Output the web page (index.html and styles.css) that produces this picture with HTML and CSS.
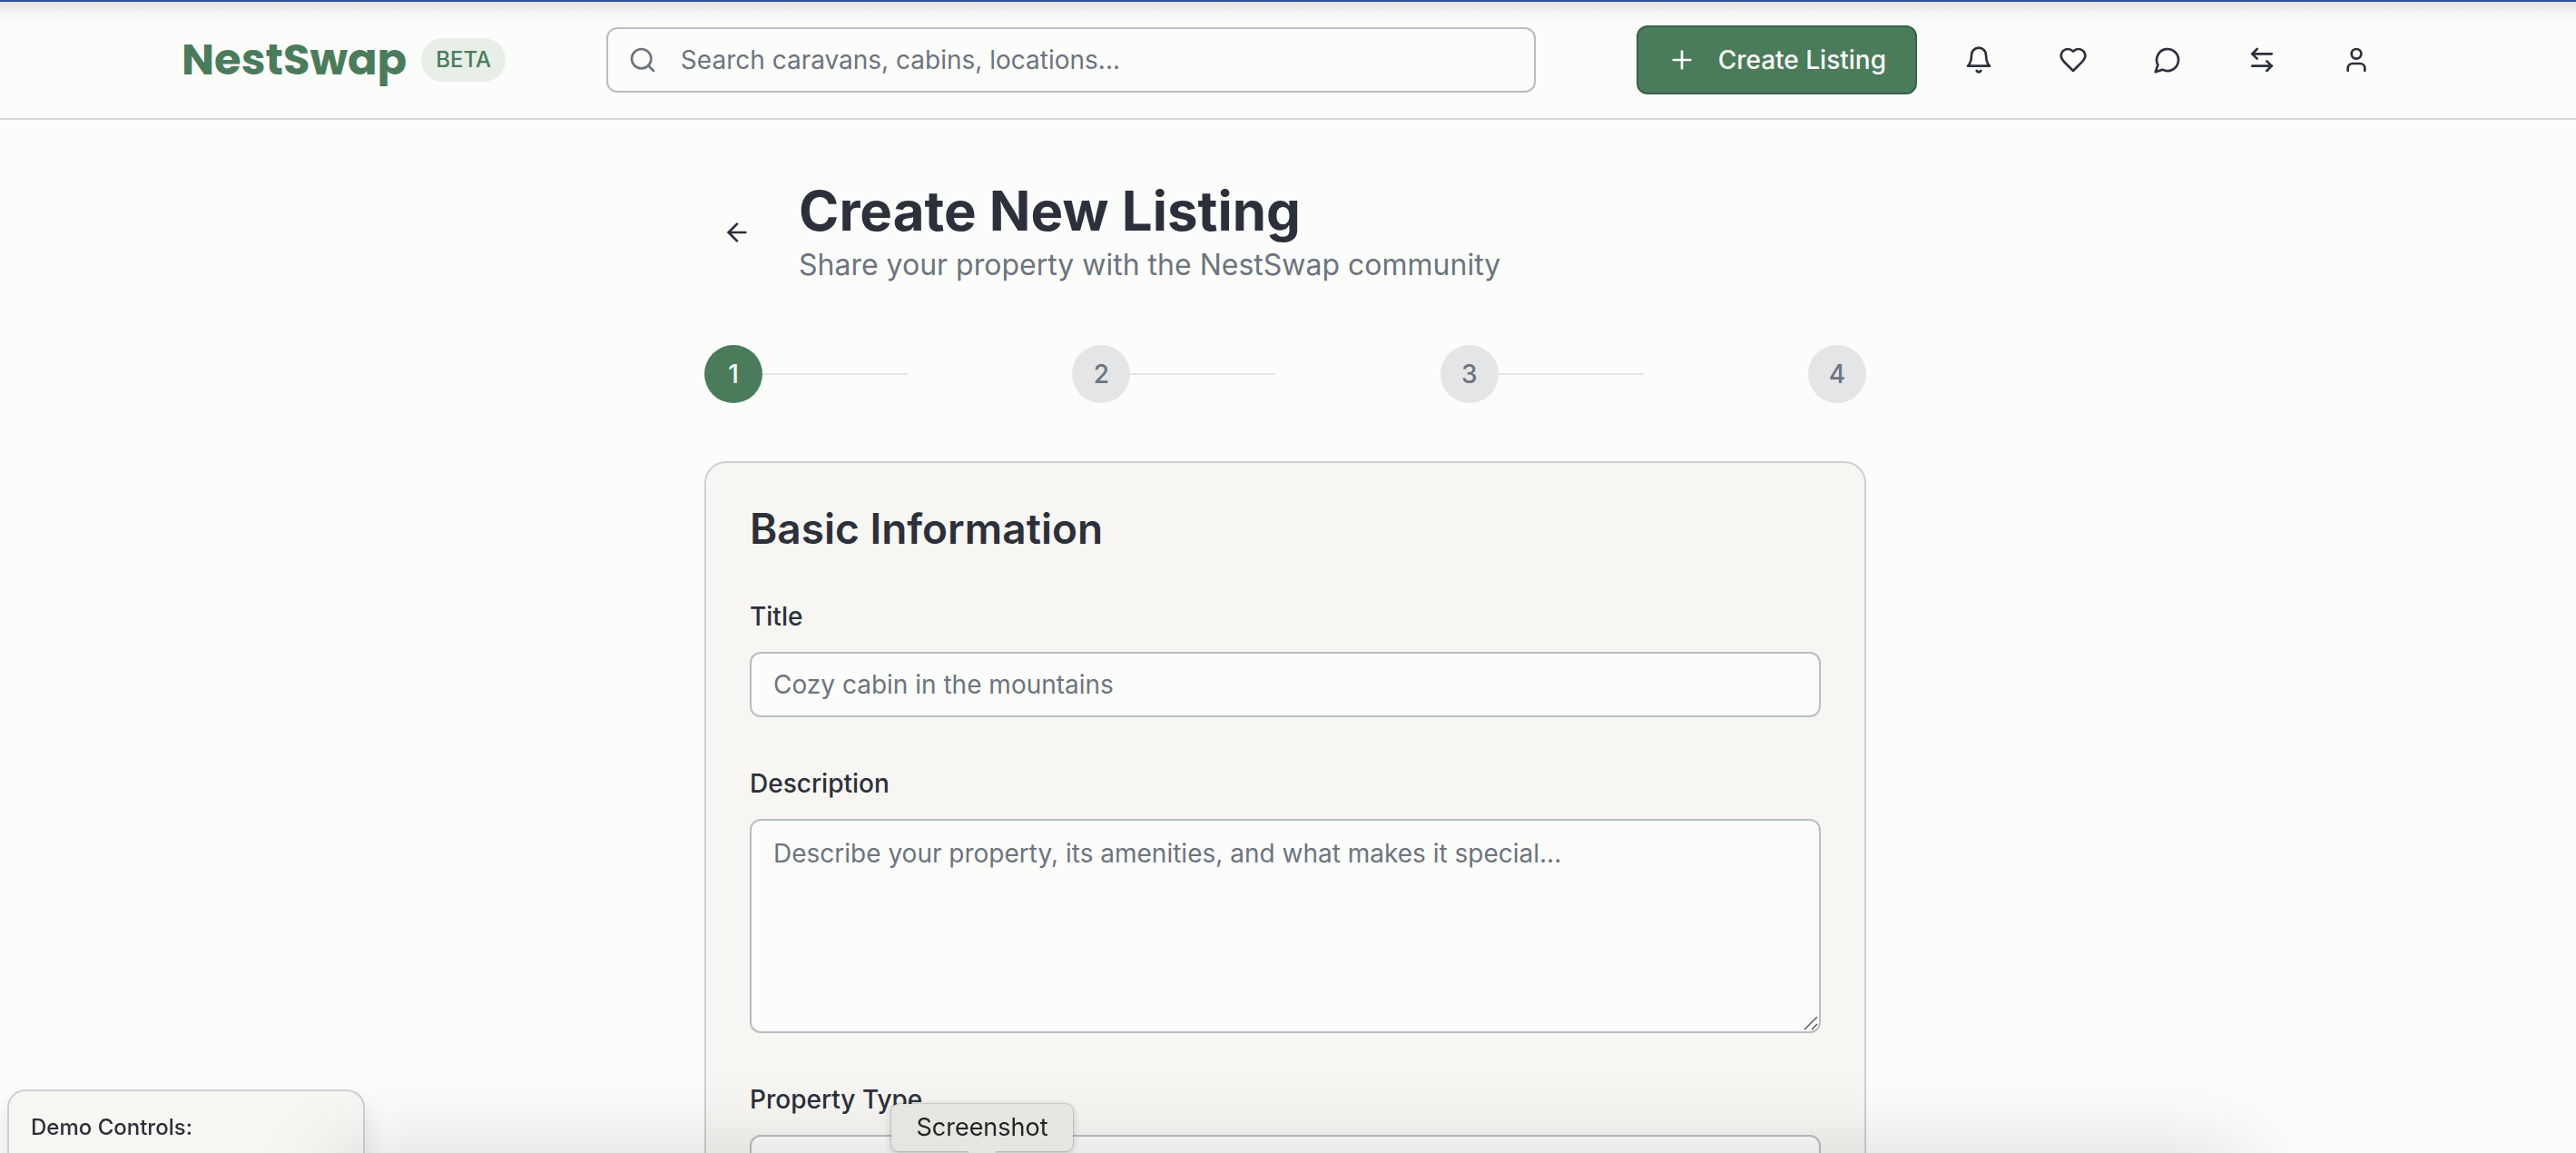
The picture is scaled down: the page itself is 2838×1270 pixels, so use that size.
FILE: index.html
```html
<!DOCTYPE html>
<html lang="en">
<head>
<meta charset="utf-8">
<meta name="viewport" content="width=device-width, initial-scale=1">
<title>NestSwap</title>
<link rel="stylesheet" href="styles.css">
</head>
<body>
<header class="site-header">
  <div class="header-inner">
    <div class="brand">
      <a class="logo" href="#">NestSwap</a>
      <span class="badge">BETA</span>
    </div>
    <div class="search">
      <svg class="icon search-icon" viewBox="0 0 24 24" aria-hidden="true"><circle cx="11" cy="11" r="8"/><path d="m21 21-4.3-4.3"/></svg>
      <input class="field search-input" type="search" aria-label="Search" placeholder="Search caravans, cabins, locations...">
    </div>
    <nav class="actions">
      <button class="create-button" type="button">
        <svg class="icon" viewBox="0 0 24 24" aria-hidden="true"><path d="M5 12h14"/><path d="M12 5v14"/></svg>
        Create Listing
      </button>
      <button class="icon-button" type="button" aria-label="Notifications">
        <svg class="icon" viewBox="0 0 24 24"><path d="M6 8a6 6 0 0 1 12 0c0 7 3 9 3 9H3s3-2 3-9"/><path d="M10.3 21a1.94 1.94 0 0 0 3.4 0"/></svg>
      </button>
      <button class="icon-button" type="button" aria-label="Favourites">
        <svg class="icon" viewBox="0 0 24 24"><path d="M19 14c1.49-1.46 3-3.21 3-5.5A5.5 5.5 0 0 0 16.5 3c-1.76 0-3 .5-4.5 2-1.5-1.5-2.74-2-4.5-2A5.5 5.5 0 0 0 2 8.5c0 2.3 1.5 4.05 3 5.5l7 7Z"/></svg>
      </button>
      <button class="icon-button" type="button" aria-label="Messages">
        <svg class="icon" viewBox="0 0 24 24"><path d="M7.9 20A9 9 0 1 0 4 16.1L2 22Z"/></svg>
      </button>
      <button class="icon-button" type="button" aria-label="Swaps">
        <svg class="icon" viewBox="0 0 24 24"><path d="M8 3 4 7l4 4"/><path d="M4 7h16"/><path d="m16 21 4-4-4-4"/><path d="M20 17H4"/></svg>
      </button>
      <button class="icon-button" type="button" aria-label="Account">
        <svg class="icon" viewBox="0 0 24 24"><path d="M19 21v-2a4 4 0 0 0-4-4H9a4 4 0 0 0-4 4v2"/><circle cx="12" cy="7" r="4"/></svg>
      </button>
    </nav>
  </div>
</header>

<main class="page">
  <div class="page-heading">
    <button class="icon-button" type="button" aria-label="Back">
      <svg class="icon" viewBox="0 0 24 24"><path d="m12 19-7-7 7-7"/><path d="M19 12H5"/></svg>
    </button>
    <div>
      <h1 class="page-title">Create New Listing</h1>
      <p class="page-subtitle">Share your property with the NestSwap community</p>
    </div>
  </div>

  <ol class="steps">
    <li class="step step-active"><span class="step-number">1</span><span class="step-line"></span></li>
    <li class="step"><span class="step-number">2</span><span class="step-line"></span></li>
    <li class="step"><span class="step-number">3</span><span class="step-line"></span></li>
    <li class="step"><span class="step-number">4</span></li>
  </ol>

  <form class="card">
    <h2 class="card-title">Basic Information</h2>
    <div class="form-row">
      <label class="label" for="title">Title</label>
      <input class="field" id="title" type="text" placeholder="Cozy cabin in the mountains">
    </div>
    <div class="form-row">
      <label class="label" for="description">Description</label>
      <div class="textarea-wrap">
        <textarea class="field field-area" id="description" placeholder="Describe your property, its amenities, and what makes it special..."></textarea>
        <svg class="grip" viewBox="0 0 16 16" aria-hidden="true"><path d="M1 15 15 1M9 15l6-6"/></svg>
      </div>
    </div>
    <div class="form-row">
      <label class="label" for="type">Property Type</label>
      <select class="field" id="type"><option></option></select>
    </div>
  </form>
</main>

<aside class="demo-panel">Demo Controls:</aside>
<div class="dock-shadow"></div>
<div class="tooltip" role="tooltip">Screenshot</div>
</body>
</html>
```
FILE: styles.css
```css
:root {
  --bg: #fcfdfa;
  --card: #f8f6f3;
  --text: #2b303b;
  --muted: #6c747f;
  --green: #4a7c5c;
  --border: #cdd0d6;
  --field-border: #b9bdc4;
}

*, *::before, *::after { box-sizing: border-box; }

body {
  margin: 0;
  height: 100vh;
  overflow: hidden;
  padding-right: 6px;
  background: var(--bg);
  color: var(--text);
  font-family: Inter, "Liberation Sans", sans-serif;
  font-size: 28px;
  line-height: 40px;
}

button, input, textarea, select { font: inherit; color: inherit; }

h1, h2, p, ol { margin: 0; padding: 0; }

.icon {
  flex: none;
  width: 32px;
  height: 32px;
  fill: none;
  stroke: currentColor;
  stroke-width: 2;
  stroke-linecap: round;
  stroke-linejoin: round;
}

/* Header */
.site-header {
  margin-right: -6px;
  padding-right: 6px;
  border-top: 2px solid #34528f;
  border-bottom: 2px solid #d3d8dc;
  background: linear-gradient(rgba(0, 0, 0, 0.1), rgba(0, 0, 0, 0.03) 12px, transparent 24px);
}

.header-inner {
  display: flex;
  align-items: center;
  justify-content: space-between;
  max-width: 2560px;
  height: 128px;
  margin: 0 auto;
  padding: 0 64px;
}

.brand { display: flex; align-items: center; gap: 16px; }

.logo {
  color: var(--green);
  font-family: Poppins, Inter, sans-serif;
  font-size: 48px;
  font-weight: 700;
  line-height: 64px;
  text-decoration: none;
}

.badge {
  padding: 8px 16px;
  border-radius: 24px;
  background: #e8eee8;
  color: var(--green);
  font-size: 24px;
  font-weight: 500;
  line-height: 32px;
}

.search { position: relative; width: 1024px; }

.search-icon {
  position: absolute;
  top: 20px;
  left: 24px;
  color: var(--muted);
}

.actions { display: flex; align-items: center; gap: 32px; }

.create-button {
  display: flex;
  align-items: center;
  gap: 24px;
  height: 76px;
  padding: 0 32px;
  border: 2px solid #38614a;
  border-radius: 12px;
  background: var(--green);
  color: #fcfcfa;
  font-weight: 500;
  white-space: nowrap;
}

.icon-button {
  display: flex;
  align-items: center;
  justify-content: center;
  width: 72px;
  height: 72px;
  padding: 0;
  border: 0;
  border-radius: 12px;
  background: none;
}

/* Fields */
.field {
  display: block;
  width: 100%;
  height: 72px;
  padding: 0 24px;
  border: 2px solid var(--field-border);
  border-radius: 12px;
  outline: 0;
  background: var(--bg);
  appearance: none;
}

.field::placeholder { color: var(--muted); opacity: 1; }

.search-input { padding-left: 80px; }

.field-area {
  height: 236px;
  padding: 16px 24px;
  resize: none;
}

.textarea-wrap { position: relative; }

.grip {
  position: absolute;
  right: 3px;
  bottom: 3px;
  width: 16px;
  height: 16px;
  fill: none;
  stroke: #5c5d5b;
  stroke-width: 1.5;
}

/* Page */
.page {
  max-width: 1280px;
  margin: 0 auto;
  padding: 64px 0;
}

.page-heading {
  display: flex;
  align-items: center;
  gap: 32px;
  margin-bottom: 64px;
}

.page-title { font-size: 60px; font-weight: 700; line-height: 72px; }

.page-subtitle { color: var(--muted); font-size: 32px; line-height: 48px; }

.steps {
  display: flex;
  justify-content: space-between;
  margin-bottom: 64px;
  list-style: none;
}

.step { display: flex; align-items: center; }

.step-number {
  display: grid;
  place-items: center;
  width: 64px;
  height: 64px;
  border-radius: 50%;
  background: #e4e5e7;
  color: var(--muted);
  font-weight: 500;
}

.step-active .step-number { background: var(--green); color: #fcfcfa; }

.step-line { width: 160px; height: 2px; background: #e4e5e9; }

.card {
  display: flex;
  flex-direction: column;
  gap: 48px;
  padding: 48px;
  border: 2px solid var(--border);
  border-radius: 24px;
  background: var(--card);
  box-shadow: 0 2px 4px rgba(0, 0, 0, 0.04);
}

.card-title { font-size: 46px; font-weight: 600; line-height: 48px; }

.form-row { display: flex; flex-direction: column; gap: 14px; }

.label { font-weight: 500; line-height: 50px; }

/* Overlays */
.demo-panel {
  position: fixed;
  bottom: 0;
  left: 8px;
  width: 394px;
  padding: 24px 24px 12px;
  border: 2px solid var(--border);
  border-bottom: 0;
  border-radius: 20px 20px 0 0;
  background: var(--card);
  box-shadow: 0 16px 24px rgba(0, 0, 0, 0.12);
  font-size: 24px;
  font-weight: 500;
  line-height: 32px;
}

.dock-shadow {
  position: fixed;
  top: 100%;
  left: 13%;
  right: 13%;
  height: 120px;
  box-shadow: 0 0 96px rgba(0, 0, 0, 0.14);
}

.tooltip {
  position: fixed;
  bottom: 2px;
  left: 982px;
  width: 200px;
  border-radius: 8px;
  background: #e5e6e2;
  box-shadow: 0 0 2px rgba(0, 0, 0, 0.4), 0 2px 8px rgba(0, 0, 0, 0.2);
  color: #242424;
  font-size: 27px;
  line-height: 52px;
  text-align: center;
}

.tooltip::after {
  content: "";
  position: absolute;
  top: 100%;
  left: 50%;
  width: 32px;
  height: 16px;
  margin-left: -16px;
  background: #e5e6e2;
  clip-path: polygon(0 0, 100% 0, 50% 100%);
}
```
